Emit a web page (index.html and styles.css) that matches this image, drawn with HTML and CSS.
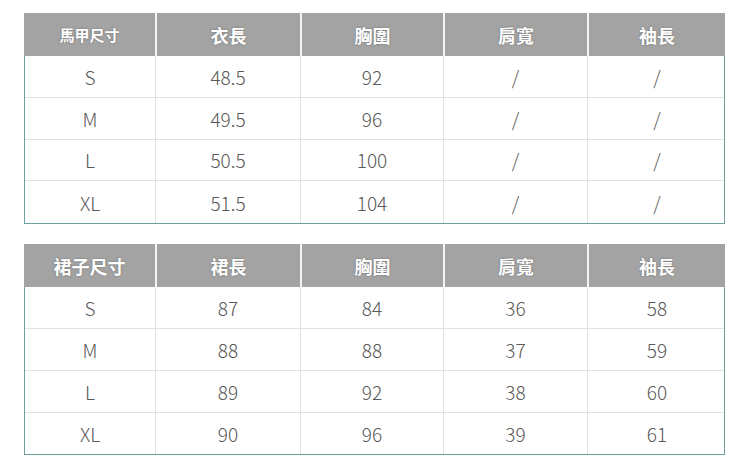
FILE: index.html
```html
<!DOCTYPE html>
<html lang="zh-Hant">
<head>
<meta charset="utf-8">
<link rel="stylesheet" href="styles.css">
</head>
<body>
<div class="page">
  <div class="size-table">
    <div class="row head">
      <div class="cell first small">馬甲尺寸</div>
      <div class="cell">衣長</div>
      <div class="cell">胸圍</div>
      <div class="cell">肩寬</div>
      <div class="cell">袖長</div>
    </div>
    <div class="body">
      <div class="row"><div class="cell">S</div><div class="cell">48.5</div><div class="cell">92</div><div class="cell">/</div><div class="cell">/</div></div>
      <div class="row"><div class="cell">M</div><div class="cell">49.5</div><div class="cell">96</div><div class="cell">/</div><div class="cell">/</div></div>
      <div class="row"><div class="cell">L</div><div class="cell">50.5</div><div class="cell">100</div><div class="cell">/</div><div class="cell">/</div></div>
      <div class="row"><div class="cell">XL</div><div class="cell">51.5</div><div class="cell">104</div><div class="cell">/</div><div class="cell">/</div></div>
    </div>
  </div>
  <div class="size-table">
    <div class="row head">
      <div class="cell first">裙子尺寸</div>
      <div class="cell">裙長</div>
      <div class="cell">胸圍</div>
      <div class="cell">肩寬</div>
      <div class="cell">袖長</div>
    </div>
    <div class="body">
      <div class="row"><div class="cell">S</div><div class="cell">87</div><div class="cell">84</div><div class="cell">36</div><div class="cell">58</div></div>
      <div class="row"><div class="cell">M</div><div class="cell">88</div><div class="cell">88</div><div class="cell">37</div><div class="cell">59</div></div>
      <div class="row"><div class="cell">L</div><div class="cell">89</div><div class="cell">92</div><div class="cell">38</div><div class="cell">60</div></div>
      <div class="row"><div class="cell">XL</div><div class="cell">90</div><div class="cell">96</div><div class="cell">39</div><div class="cell">61</div></div>
    </div>
  </div>
</div>
</body>
</html>
```
FILE: styles.css
```css
* { box-sizing: border-box; }
html, body { margin: 0; padding: 0; background: #fff; }
body {
  font-family: "Noto Sans CJK TC", "Noto Sans", sans-serif;
}
.page {
  padding: 13px 0 0 24px;
  display: flex;
  flex-direction: column;
  gap: 20px;
}
.size-table {
  width: 701px;
}
.row {
  display: grid;
  grid-template-columns: 131px 145px 143px 144px 138px;
}
.head {
  height: 43px;
  background: #a3a3a3;
}
.head .cell {
  color: #fff;
  font-weight: 700;
  font-size: 18px;
  text-shadow: 0 0 2px rgba(0,0,0,0.35);
  border-left: 2px solid #f4f4f4;
}
.head .cell.first { border-left: none; }
.head .cell.small { font-size: 15px; }
.cell {
  display: flex;
  align-items: center;
  justify-content: center;
}
.body {
  border: 1.5px solid #6f9f9c;
  border-top: none;
}
.body .row {
  height: 41.8px;
  border-bottom: 1px solid #e2e2e2;
}
.body .row:last-child { border-bottom: none; }
.body .cell {
  color: #595959;
  font-size: 19px;
  font-weight: 300;
  border-right: 1px solid #e2e2e2;
}
.body .cell:last-child { border-right: none; }
```
